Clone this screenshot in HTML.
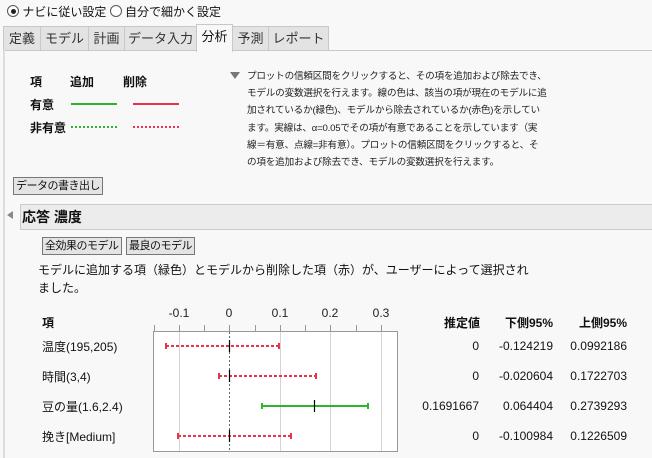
<!DOCTYPE html>
<html><head><meta charset="utf-8"><style>
body{margin:0;width:652px;height:458px;background:#f8f8f8;font-family:"Liberation Sans","Noto Sans CJK JP",sans-serif;color:#111;position:relative;overflow:hidden}
.a{position:absolute;white-space:nowrap}
.tab{position:absolute;top:26px;height:23px;background:#e3e3e3;border:1px solid #c8c8c8;border-bottom:none;font-size:13px;line-height:23px;text-align:center;color:#333}
.btn{position:absolute;background:#e4e4e4;border:1px solid #777;font-size:11px;line-height:16px;padding:0 2px;letter-spacing:-0.5px}
.b{font-weight:bold}
.r{text-align:right}
</style></head><body>
<div class="a" style="left:7px;top:4px;font-size:12px;line-height:16px">
<span style="display:inline-block;width:10px;height:10px;border:1px solid #555;border-radius:50%;vertical-align:-1px;position:relative;background:#fff"><span style="position:absolute;left:2.5px;top:2.5px;width:5px;height:5px;border-radius:50%;background:#222"></span></span> ナビに従い設定 <span style="display:inline-block;width:10px;height:10px;border:1px solid #555;border-radius:50%;vertical-align:-1px;background:#fff"></span> 自分で細かく設定</div>
<div class="tab" style="left:3px;width:36px">定義</div>
<div class="tab" style="left:40px;width:47px">モデル</div>
<div class="tab" style="left:88px;width:35px">計画</div>
<div class="tab" style="left:124px;width:71px">データ入力</div>
<div class="tab" style="left:196px;width:35px;top:24px;height:27px;background:#f8f8f8;color:#111;z-index:2">分析</div>
<div class="tab" style="left:232px;width:35px">予測</div>
<div class="tab" style="left:268px;width:59px">レポート</div>
<div class="a" style="left:3px;top:50px;width:649px;height:1px;background:#c8c8c8"></div>
<div class="a" style="left:3px;top:50px;width:2px;height:408px;background:#ddd"></div>
<div class="a b" style="left:30px;top:73px;font-size:12px">項</div>
<div class="a b" style="left:70px;top:73px;font-size:12px">追加</div>
<div class="a b" style="left:123px;top:73px;font-size:12px">削除</div>
<div class="a b" style="left:30px;top:96px;font-size:12px">有意</div>
<div class="a b" style="left:30px;top:119px;font-size:12px">非有意</div>
<div class="a" style="left:71px;top:103px;width:46px;height:2px;background:#2db52d"></div>
<div class="a" style="left:133px;top:103px;width:46px;height:2px;background:#e8334a"></div>
<div class="a" style="left:71px;top:126px;width:46px;border-top:2px dotted #2db52d"></div>
<div class="a" style="left:133px;top:126px;width:46px;border-top:2px dotted #e8334a"></div>
<div class="a" style="left:230px;top:72px;width:0;height:0;border-left:5px solid transparent;border-right:5px solid transparent;border-top:7px solid #777"></div>
<div class="a" style="left:247px;top:68px;font-size:9.6px;line-height:17.2px;color:#222;letter-spacing:-0.2px">プロットの信頼区間をクリックすると、その項を追加および除去でき、<br>モデルの変数選択を行えます。線の色は、該当の項が現在のモデルに追<br>加されているか(緑色)、モデルから除去されているか(赤色)を示してい<br>ます。実線は、α=0.05でその項が有意であることを示しています（実<br>線＝有意、点線=非有意）。プロットの信頼区間をクリックすると、そ<br>の項を追加および除去でき、モデルの変数選択を行えます。</div>
<div class="btn" style="left:13px;top:177px">データの書き出し</div>
<div class="a" style="left:7px;top:211px;width:0;height:0;border-top:4px solid transparent;border-bottom:4px solid transparent;border-right:6px solid #888"></div>
<div class="a" style="left:20px;top:204px;width:632px;height:24px;background:#ececec;border:1px solid #ccc;border-right:none"></div>
<div class="a b" style="left:22px;top:207px;font-size:14px">応答 濃度</div>
<div class="btn" style="left:42px;top:237px">全効果のモデル</div>
<div class="btn" style="left:126px;top:237px">最良のモデル</div>
<div class="a" style="left:38px;top:261px;font-size:12px;line-height:18px">モデルに追加する項（緑色）とモデルから削除した項（赤）が、ユーザーによって選択され<br>ました。</div>
<div class="a b" style="left:42px;top:314px;font-size:12px">項</div>
<div class="a" style="left:42px;top:338px;font-size:12px">温度(195,205)</div>
<div class="a" style="left:42px;top:368px;font-size:12px">時間(3,4)</div>
<div class="a" style="left:42px;top:398px;font-size:12px">豆の量(1.6,2.4)</div>
<div class="a" style="left:42px;top:428px;font-size:12px">挽き[Medium]</div>
<div class="a b r" style="left:420px;width:60px;top:314px;font-size:12px">推定値</div>
<div class="a b r" style="left:490px;width:63px;top:314px;font-size:12px">下側95%</div>
<div class="a b r" style="left:560px;width:67px;top:314px;font-size:12px">上側95%</div>
<div class="a r" style="left:400px;width:79px;top:331px;font-size:12px;line-height:30px">0<br>0<br>0.1691667<br>0</div>
<div class="a r" style="left:480px;width:73px;top:331px;font-size:12px;line-height:30px">-0.124219<br>-0.020604<br>0.064404<br>-0.100984</div>
<div class="a r" style="left:550px;width:77px;top:331px;font-size:12px;line-height:30px">0.0992186<br>0.1722703<br>0.2739293<br>0.1226509</div>
<svg class="a" style="left:0;top:0" width="652" height="458">
<g font-size="12" fill="#222" text-anchor="middle" font-family="Liberation Sans,sans-serif">
<text x="179" y="317">-0.1</text><text x="229" y="317">0</text><text x="280" y="317">0.1</text><text x="330" y="317">0.2</text><text x="381" y="317">0.3</text></g>
<g stroke="#999" stroke-width="1">
<path d="M154.5 325v6M179.5 325v6M204.5 325v6M229.5 325v6M255.5 325v6M280.5 325v6M305.5 325v6M330.5 325v6M356.5 325v6M381.5 325v6"/></g>
<rect x="153.5" y="331.5" width="244" height="120" fill="#fff" stroke="#999"/>
<g stroke="#d4d4d4"><path d="M179.5 332v119M280.5 332v119M330.5 332v119M381.5 332v119"/></g>
<path d="M229.5 332v119" stroke="#666" stroke-dasharray="2,2"/>
<g stroke="#e8334a" stroke-width="2" stroke-dasharray="3,2">
<path d="M166 346H279"/><path d="M219 376H316"/><path d="M178 436H291"/></g>
<g stroke="#e8334a" stroke-width="2"><path d="M166 343v6M279 343v6M219 373v6M316 373v6M178 433v6M291 433v6"/></g>
<path d="M262 406H368M262 403v6M368 403v6" stroke="#2db52d" stroke-width="2"/>
<g stroke="#000" stroke-width="1.2"><path d="M229.5 340v12M229.5 370v12M314.5 400v12M229.5 430v12"/></g>
</svg>
</body></html>
